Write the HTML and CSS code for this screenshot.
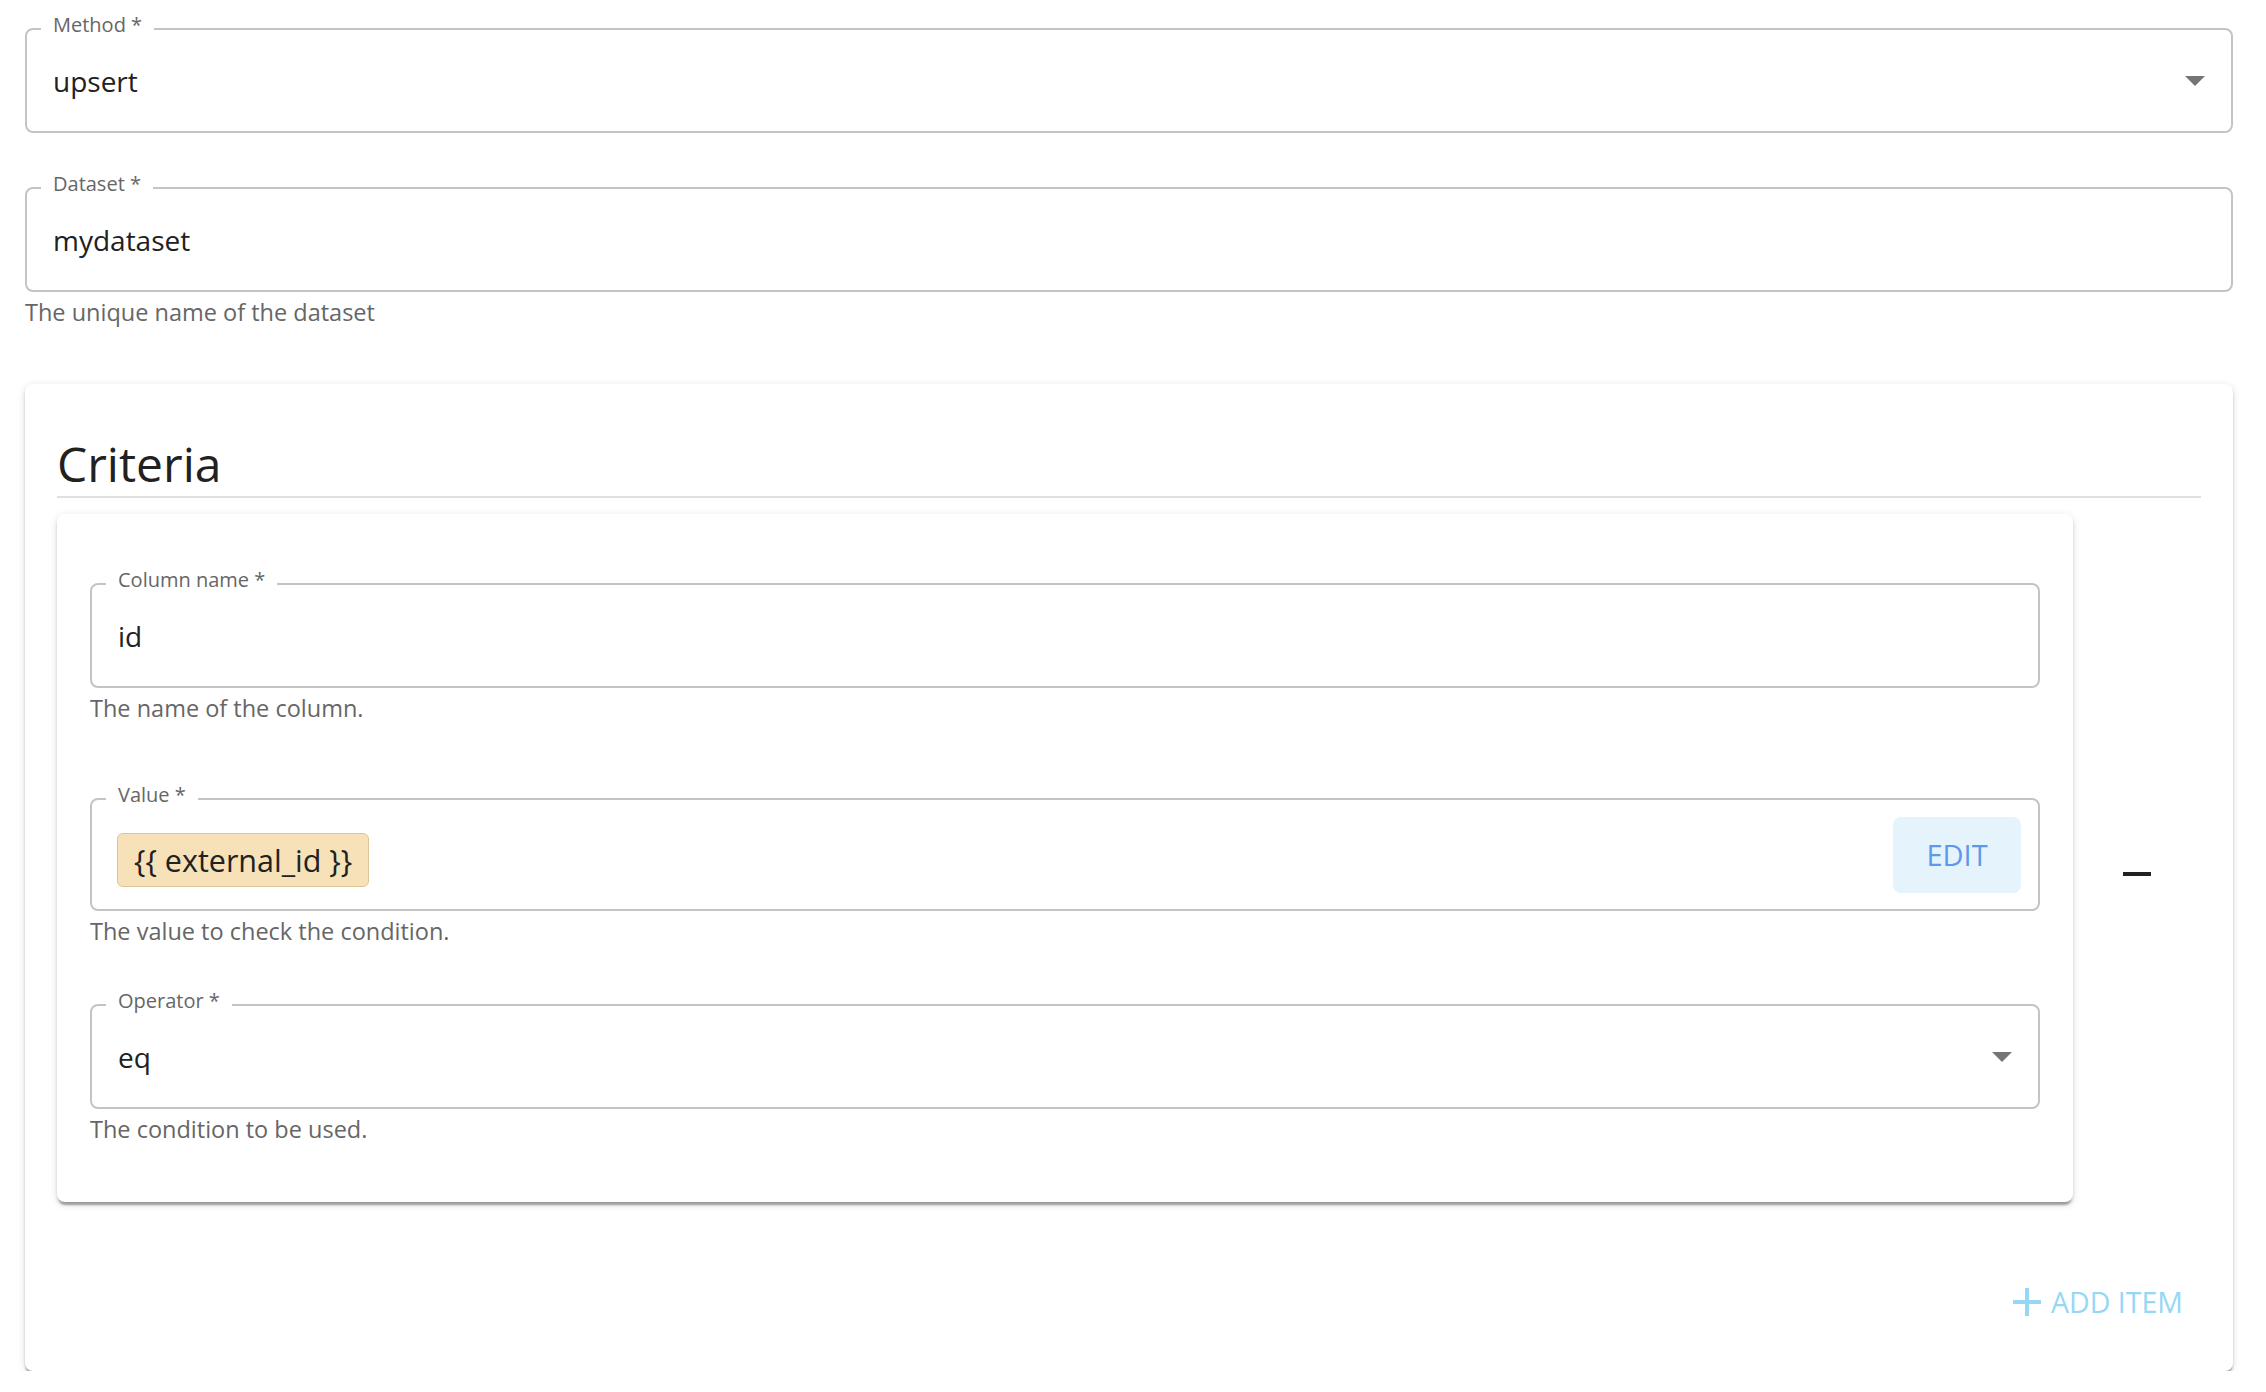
FILE: index.html
```html
<!DOCTYPE html>
<html lang="en">
<head>
    <meta charset="UTF-8">
    <meta name="viewport" content="width=device-width, initial-scale=1.0">
    <title>Upsert row</title>
    <link rel="stylesheet" href="styles.css">
</head>
<body>
    <div class="page">
        <div class="field">
            <div class="field-box select">
                <span class="field-label">Method *</span>
                <span class="field-value">upsert</span>
                <svg class="select-arrow" viewBox="7 10 10 5"><path d="M7 10l5 5 5-5z"/></svg>
            </div>
        </div>

        <div class="field field-spaced">
            <div class="field-box">
                <span class="field-label">Dataset *</span>
                <span class="field-value">mydataset</span>
            </div>
            <p class="helper">The unique name of the dataset</p>
        </div>

        <section class="paper">
            <h2 class="paper-title">Criteria</h2>
            <hr class="divider">

            <div class="criteria-row">
                <div class="criteria-card">
                    <div class="field">
                        <div class="field-box">
                            <span class="field-label">Column name *</span>
                            <span class="field-value">id</span>
                        </div>
                        <p class="helper">The name of the column.</p>
                    </div>

                    <div class="field value-field">
                        <div class="field-box value-box">
                            <span class="field-label">Value *</span>
                            <span class="chip">{{ external_id }}</span>
                            <button class="edit-btn">EDIT</button>
                        </div>
                        <p class="helper">The value to check the condition.</p>
                    </div>

                    <div class="field operator-field">
                        <div class="field-box select">
                            <span class="field-label">Operator *</span>
                            <span class="field-value">eq</span>
                            <svg class="select-arrow" viewBox="7 10 10 5"><path d="M7 10l5 5 5-5z"/></svg>
                        </div>
                        <p class="helper">The condition to be used.</p>
                    </div>
                </div>

                <div class="remove-col">
                    <button class="remove-btn" title="Remove"><span class="minus"></span></button>
                </div>
            </div>

            <div class="add-row">
                <button class="add-btn">
                    <svg class="plus" viewBox="0 0 28 28"><path d="M14 0v28M0 14h28"/></svg>
                    ADD ITEM
                </button>
            </div>
        </section>
    </div>
</body>
</html>
```

FILE: styles.css
```css
body {
    margin: 0;
    padding: 28px 0 0 25px;
    font-family: "Open Sans", sans-serif;
    background-color: #ffffff;
    color: #212121;
}
.page {
    width: 2208px;
}
.field-spaced {
    margin-top: 54px;
}
.field-box {
    position: relative;
    box-sizing: border-box;
    height: 105px;
    display: flex;
    align-items: center;
    padding: 0 26px;
    border: 2px solid #c4c4c4;
    border-radius: 8px;
}
.field-label {
    position: absolute;
    top: -17px;
    left: 14px;
    padding: 0 12px;
    background-color: #ffffff;
    font-size: 20px;
    line-height: 24px;
    color: #666666;
}
.field-value {
    font-size: 28px;
    line-height: 38px;
    color: #212121;
}
.select-arrow {
    margin-left: auto;
    width: 20px;
    height: 10px;
    fill: #757575;
}
.helper {
    margin: 2px 0 0;
    font-size: 23.5px;
    line-height: 36px;
    color: #666666;
}

/* criteria paper */
.paper {
    margin-top: 54px;
    padding: 51px 32px 35px;
    border-radius: 8px;
    background-color: #ffffff;
    box-shadow: 0 4px 2px -1px rgba(0,0,0,0.24), 0 2px 3px 0 rgba(0,0,0,0.14), 0 2px 8px 0 rgba(0,0,0,0.12);
}
.paper-title {
    margin: 0;
    font-size: 48px;
    font-weight: 400;
    line-height: 58px;
    color: #212121;
}
.divider {
    margin: 3px 0 16px;
    height: 2px;
    border: none;
    background-color: #e0e0e0;
}
.criteria-row {
    display: flex;
}
.criteria-card {
    flex: 1;
    padding: 69px 33px 55px;
    border-radius: 8px;
    background-color: #ffffff;
    box-shadow: 0 5px 2px -2px rgba(0,0,0,0.24), 0 3px 3px 0 rgba(0,0,0,0.14), 0 2px 8px 0 rgba(0,0,0,0.12);
}
.value-field {
    margin-top: 72px;
}
.operator-field {
    margin-top: 55px;
}
.value-box {
    height: 113px;
    padding: 0 17px 0 25px;
}
.chip {
    margin-top: 10px;
    padding: 6px 16px;
    border: 1px solid #dcc597;
    border-radius: 6px;
    background-color: #f6e1b8;
    font-size: 30.5px;
    line-height: 40px;
    color: #212121;
}
.edit-btn {
    margin-left: auto;
    width: 128px;
    height: 76px;
    border: none;
    border-radius: 8px;
    background-color: #e5f4fc;
    color: #5e98ea;
    font-family: inherit;
    font-size: 29px;
    cursor: pointer;
}
.remove-col {
    width: 128px;
    display: flex;
    align-items: center;
    justify-content: center;
}
.remove-btn {
    margin-top: 32px;
    padding: 12px 0;
    border: none;
    background: none;
    cursor: pointer;
}
.minus {
    display: block;
    width: 28px;
    height: 4px;
    background-color: #212121;
}
.add-row {
    display: flex;
    justify-content: flex-end;
    margin-top: 66px;
}
.add-btn {
    display: flex;
    align-items: center;
    gap: 10px;
    padding: 12px 18px 12px 16px;
    border: none;
    background: none;
    color: #97d7f6;
    font-family: inherit;
    font-size: 28.5px;
    line-height: 44px;
    cursor: pointer;
}
.plus {
    width: 28px;
    height: 28px;
    stroke: #97d7f6;
    stroke-width: 4;
}
```
